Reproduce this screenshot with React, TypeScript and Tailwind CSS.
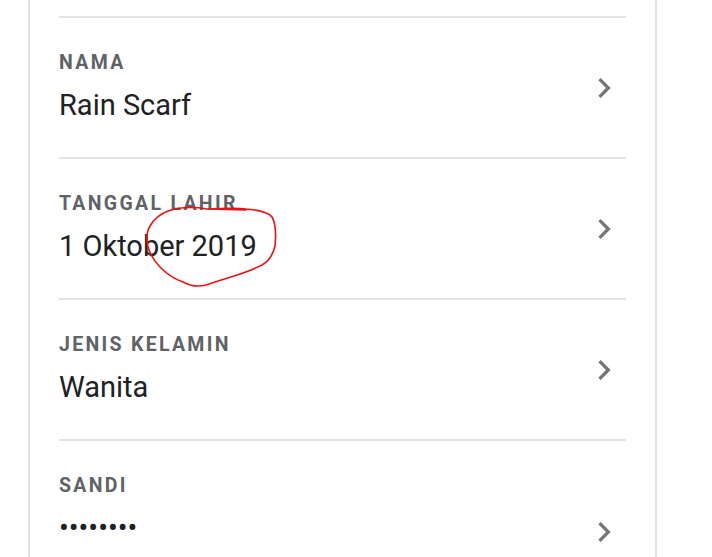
import { Fragment } from "react";

interface Field {
  label: string;
  value: string;
  tall?: boolean;
}

const FIELDS: Field[] = [
  { label: "NAMA", value: "Rain Scarf" },
  { label: "TANGGAL LAHIR", value: "1 Oktober 2019" },
  { label: "JENIS KELAMIN", value: "Wanita" },
  { label: "SANDI", value: "••••••••", tall: true },
];

function Chevron() {
  return (
    <svg viewBox="0 0 24 24" className="h-10 w-10 shrink-0 fill-[#757575]">
      <path d="M10 6L8.59 7.41 13.17 12l-4.58 4.59L10 18l6-6z" />
    </svg>
  );
}

function FieldRow({ field }: { field: Field }) {
  return (
    <div
      className={`flex justify-between border-b-2 border-[#e4e4e4] pr-[2px] ${
        field.tall ? "h-[184px]" : "h-[141px]"
      }`}
    >
      <div className="flex flex-col pt-[33px]">
        <span className="text-[19.5px] leading-[24px] font-bold tracking-[2.3px] text-[#5f6368]">
          {field.label}
        </span>
        <span className="mt-[12px] text-[29px] leading-[36px] text-[#202124]">
          {field.value}
        </span>
      </div>
      <div className="flex items-center">
        <Chevron />
      </div>
    </div>
  );
}

// coretan merah tangan di atas tanggal lahir
function Scribble() {
  return (
    <svg
      className="pointer-events-none absolute left-0 top-0"
      width="712"
      height="557"
      viewBox="0 0 712 557"
      fill="none"
    >
      <path
        d="M207 209 C225 208 238 208 246 209 C258 210 268 212 272 217 C276 224 276 236 275 246 C273 255 269 261 262 265 C252 270 243 273 234 276 C224 279 215 282 206 285 C198 287 190 286 183 282 C174 279 167 274 161 268 C155 262 150 255 148 247 C146 239 147 231 150 226 C154 219 160 214 168 211 C180 207 195 207 207 209 L246 210"
        stroke="#ee1111"
        strokeWidth="1.6"
        strokeLinecap="round"
        strokeLinejoin="round"
      />
    </svg>
  );
}

export default function App() {
  return (
    <div className="relative h-[557px] w-[712px] overflow-hidden bg-white font-['Roboto',_'Noto_Sans',_sans-serif]">
      <div className="ml-[28px] h-full w-[629px] border-x-2 border-[#e2e2e2] px-[29px]">
        <div className="h-[18px] border-b-2 border-[#e4e4e4]" />
        {FIELDS.map((f) => (
          <Fragment key={f.label}>
            <FieldRow field={f} />
          </Fragment>
        ))}
      </div>
      <Scribble />
    </div>
  );
}
